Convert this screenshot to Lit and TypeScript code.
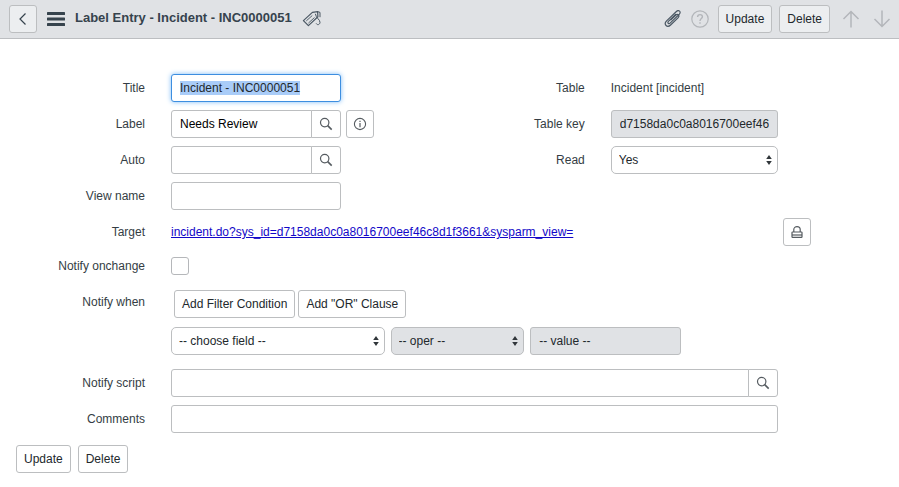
import { LitElement, html, css, svg } from "lit";
import { customElement, query } from "lit/decorators.js";

const searchIcon = html`<svg class="icon" width="14" height="14" viewBox="0 0 14 14" aria-hidden="true">
  <circle cx="5.7" cy="5.6" r="4.2" /><path d="M8.7 8.6 L12.7 12.6" stroke-width="1.6" />
</svg>`;

const sortIcon = html`<svg class="sort" width="6" height="10" viewBox="0 0 6 10" aria-hidden="true">
  <path d="M3 0 L5.8 4 H0.2 Z M3 10 L5.8 6 H0.2 Z" />
</svg>`;

const arrow = (d: string) => html`<svg class="icon" width="18" height="20" viewBox="0 0 18 20" aria-hidden="true">
  ${svg`<path d=${d} stroke-width="1.5" />`}
</svg>`;

@customElement("app-root")
export class AppRoot extends LitElement {
  @query("#title") titleInput!: HTMLInputElement;

  static styles = css`
    :host {
      display: block;
      background: #fff;
      color: #343d44;
      font: 12px/16px "Liberation Sans", Arial, Helvetica, sans-serif;
    }
    * { box-sizing: border-box; }
    .bar {
      display: flex;
      align-items: center;
      height: 39px;
      padding: 0 8px 0 9px;
      background: #e0e2e5;
      border-bottom: 1px solid #bcbec1;
    }
    .bar h1 {
      margin: 0 10px;
      font-size: 13px;
      line-height: 16px;
      padding-bottom: 2px;
      color: #36434d;
      white-space: nowrap;
    }
    .tools {
      display: flex;
      align-items: center;
      margin-left: auto;
    }
    .tools .btn { margin-left: 7px; background: #eceef0; }
    .plain {
      display: flex;
      padding: 0;
      border: 0;
      background: none;
      color: #4a5763;
    }
    .plain.faint { color: #b3b6ba; }
    .help { margin: 0 2px 0 9px; }
    .up { margin-left: 12px; }
    .down { margin-left: 13px; }
    .icon {
      display: block;
      fill: none;
      stroke: currentColor;
      stroke-width: 1.2;
    }
    .btn, .text, .pick select {
      height: 28px;
      border: 1px solid #bcbec0;
      border-radius: 3px;
      background: #fff;
      color: #22282c;
      font: inherit;
    }
    .btn {
      flex: none;
      padding: 0 7px;
      white-space: nowrap;
    }
    .btn.square {
      display: flex;
      align-items: center;
      justify-content: center;
      width: 28px;
      padding: 0;
      color: #555b60;
    }
    .btn.square.back { margin-right: 10px; background: #eceef0; color: #36434d; }
    .menu { color: #36434d; }
    .form {
      display: grid;
      gap: 8px;
      padding: 35px 88px 0 0;
    }
    .row {
      display: grid;
      grid-template-columns: minmax(0, 1fr) 28px;
      gap: 5px;
      min-height: 28px;
    }
    .row.short { min-height: 24px; }
    .row.when { margin-top: 4px; }
    .row.after { margin-top: 6px; }
    .pair {
      display: grid;
      grid-template-columns: 13fr 10fr;
    }
    .field {
      display: grid;
      grid-template-columns: 145px minmax(0, 1fr);
      column-gap: 26px;
      align-items: center;
    }
    .field.top { align-items: start; }
    .field.top .label { line-height: 24px; }
    .label { text-align: right; }
    .text {
      width: 100%;
      min-width: 0;
      padding: 0 8px;
      color: #000;
      outline: none;
    }
    .text.narrow, .lookup.narrow { width: 170px; }
    .text:focus {
      border-color: #3d8ee0;
      box-shadow: 0 0 5px #7dbcf7;
    }
    .text::selection { background: #a9ccf8; color: #22282c; }
    .text.locked, .pick select:disabled {
      background: #e0e2e5;
      color: #22282c;
      opacity: 1;
    }
    .with-info { display: flex; gap: 5px; }
    .lookup { display: flex; width: 100%; }
    .lookup .text { flex: 1; border-radius: 3px 0 0 3px; }
    .lookup .btn { margin-left: -1px; border-radius: 0 3px 3px 0; width: 30px; }
    .pick { display: grid; align-items: center; }
    .pick select {
      grid-area: 1 / 1;
      width: 100%;
      padding: 0 16px 0 7px;
      border-radius: 5px;
      appearance: none;
    }
    .sort {
      grid-area: 1 / 1;
      justify-self: end;
      margin-right: 6px;
      fill: #30363a;
      pointer-events: none;
      z-index: 1;
    }
    .link { color: #1207c8; justify-self: start; white-space: nowrap; }
    .check {
      appearance: none;
      width: 18px;
      height: 18px;
      margin: 0;
      border: 1px solid #b5b7ba;
      border-radius: 3px;
      background: #fff;
    }
    .clauses { display: flex; gap: 3px; padding-left: 3px; }
    .filter {
      display: grid;
      grid-template-columns: minmax(0, 214fr) minmax(0, 134fr) minmax(0, 151fr);
      gap: 6px;
      width: 84%;
      margin-top: 9px;
    }
    .footer {
      display: flex;
      gap: 7px;
      padding: 12px 16px;
    }
  `;

  firstUpdated() {
    this.titleInput.focus();
    this.titleInput.select();
  }

  private lookup(id: string, value: string, size: string) {
    return html`<div class="lookup ${size}">
      <input class="text" id=${id} type="text" .value=${value} />
      <button class="btn square" type="button" aria-label="Search">${searchIcon}</button>
    </div>`;
  }

  render() {
    return html`
      <header class="bar">
        <button class="btn square back" type="button" aria-label="Back">
          <svg class="icon" width="10" height="14" viewBox="0 0 10 14"><path d="M7.5 1.5 L2 7 L7.5 12.5" /></svg>
        </button>
        <button class="plain menu" type="button" aria-label="Menu">
          <svg width="18" height="14" viewBox="0 0 18 14" fill="currentColor">
            <rect width="18" height="3" rx="0.6" /><rect y="5.5" width="18" height="3" rx="0.6" /><rect y="11" width="18" height="3" rx="0.6" />
          </svg>
        </button>
        <h1>Label Entry - Incident - INC0000051</h1>
        <button class="plain" type="button" aria-label="Tags">
          <svg class="icon" width="20" height="18" viewBox="0 0 20 18" stroke-linejoin="round" stroke-linecap="round">
            <path d="M1.4 10.6 L10.4 2.4 L15.6 1.6 L15.9 6.8 L6.4 15.6 Z" />
            <path stroke-width="0.9" d="M4.6 10.6 L10 5.8 M6.7 12.8 L12.2 7.8" />
            <path stroke-width="1" d="M13.4 4.2 C14 8.4 18.4 9.6 18 12.6 C17.6 14.8 15.4 15.4 14.4 13.8 M15.6 1.6 L18 2.4 L18 6.8" />
          </svg>
        </button>
        <div class="tools">
          <button class="plain" type="button" aria-label="Attachments">
            <svg class="icon" width="18" height="18" viewBox="0 0 18 18" stroke-linecap="round" stroke-linejoin="round">
              <path d="M11.6 4.4 L4.4 11.4 C3 12.8 4.7 14.4 6.1 13.1 L15.3 4.2 C17.6 1.8 14.6 -0.6 12.4 1.5 L2.6 10.9 C-0.8 14.4 3.2 18.2 6.6 15 L14 7.9 C16.2 5.6 13.8 3.2 11.6 5.2 L6.9 9.8" />
            </svg>
          </button>
          <button class="plain faint help" type="button" aria-label="Help">
            <svg class="icon" width="18" height="18" viewBox="0 0 18 18">
              <circle cx="9" cy="9" r="8.2" />
              <path stroke-width="1.4" d="M6.6 7.1 C6.6 3.8 11.5 3.9 11.4 6.8 C11.4 8.6 9 8.6 9 11 M9 12.3 V13.8" />
            </svg>
          </button>
          <button class="btn" type="button">Update</button>
          <button class="btn" type="button">Delete</button>
          <button class="plain faint up" type="button" aria-label="Previous record">
            ${arrow("M9 18.5 V2.5 M1.5 10 L9 2.5 L16.5 10")}
          </button>
          <button class="plain faint down" type="button" aria-label="Next record">
            ${arrow("M9 1.5 V17.5 M1.5 10 L9 17.5 L16.5 10")}
          </button>
        </div>
      </header>

      <form @submit=${(e: Event) => e.preventDefault()}>
        <div class="form">
          <div class="row">
            <div class="pair">
              <div class="field">
                <label class="label" for="title">Title</label>
                <input class="text narrow" id="title" type="text" value="Incident - INC0000051" />
              </div>
              <div class="field"><span class="label">Table</span><span>Incident [incident]</span></div>
            </div>
          </div>
          <div class="row">
            <div class="pair">
              <div class="field">
                <label class="label" for="label">Label</label>
                <div class="with-info">
                  ${this.lookup("label", "Needs Review", "narrow")}
                  <button class="btn square" type="button" aria-label="Info">
                    <svg class="icon" width="14" height="14" viewBox="0 0 14 14">
                      <circle cx="7" cy="7" r="5.6" stroke-width="1.1" /><path d="M7 6 V10.3 M7 3.7 V5" />
                    </svg>
                  </button>
                </div>
              </div>
              <div class="field">
                <label class="label" for="key">Table key</label>
                <input class="text locked" id="key" type="text" readonly value="d7158da0c0a8016700eef46c8d1f3661" />
              </div>
            </div>
          </div>
          <div class="row">
            <div class="pair">
              <div class="field">
                <label class="label" for="auto">Auto</label>
                ${this.lookup("auto", "", "narrow")}
              </div>
              <div class="field">
                <label class="label" for="read">Read</label>
                <div class="pick">
                  <select id="read"><option>Yes</option><option>No</option></select>${sortIcon}
                </div>
              </div>
            </div>
          </div>
          <div class="row">
            <div class="field">
              <label class="label" for="view">View name</label>
              <input class="text narrow" id="view" type="text" />
            </div>
          </div>
          <div class="row">
            <div class="field">
              <span class="label">Target</span>
              <a class="link" href="#target">incident.do?sys_id=d7158da0c0a8016700eef46c8d1f3661&amp;sysparm_view=</a>
            </div>
            <button class="btn square" type="button" aria-label="Unlock target">
              <svg class="icon" width="14" height="14" viewBox="0 0 14 14">
                <path d="M3.8 7 V4.6 C3.8 0.6 10.2 0.6 10.2 4.6 V7" />
                <rect x="2" y="7" width="10" height="5.4" rx="0.6" /><path d="M2 10 H12" />
              </svg>
            </button>
          </div>
          <div class="row short">
            <div class="field">
              <label class="label" for="onchange">Notify onchange</label>
              <input class="check" id="onchange" type="checkbox" />
            </div>
          </div>
          <div class="row when">
            <div class="field top">
              <span class="label">Notify when</span>
              <div>
                <div class="clauses">
                  <button class="btn" type="button">Add Filter Condition</button>
                  <button class="btn" type="button">Add "OR" Clause</button>
                </div>
                <div class="filter">
                  <div class="pick">
                    <select aria-label="Field"><option>-- choose field --</option></select>${sortIcon}
                  </div>
                  <div class="pick">
                    <select aria-label="Operator" disabled><option>-- oper --</option></select>${sortIcon}
                  </div>
                  <input class="text locked" type="text" aria-label="Value" disabled value="-- value --" />
                </div>
              </div>
            </div>
          </div>
          <div class="row after">
            <div class="field">
              <label class="label" for="script">Notify script</label>
              ${this.lookup("script", "", "wide")}
            </div>
          </div>
          <div class="row">
            <div class="field">
              <label class="label" for="comments">Comments</label>
              <input class="text" id="comments" type="text" />
            </div>
          </div>
        </div>
        <div class="footer">
          <button class="btn" type="submit">Update</button>
          <button class="btn" type="button">Delete</button>
        </div>
      </form>
    `;
  }
}
